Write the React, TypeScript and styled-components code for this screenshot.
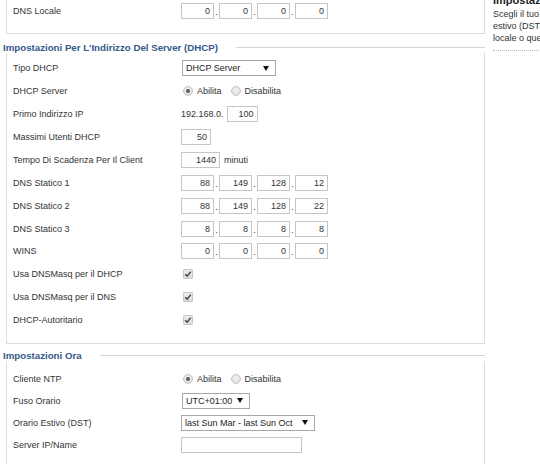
import React from "react";
import styled, { createGlobalStyle } from "styled-components";

const GlobalStyle = createGlobalStyle`
  html, body { margin: 0; padding: 0; background: #fff; overflow: hidden; }
  body {
    font-family: "Liberation Sans", Arial, sans-serif;
    font-size: 9px;
    color: #333;
  }
`;

const Page = styled.div`
  display: flex;
  width: 540px;
  height: 464px;
  overflow: hidden;
`;

const Main = styled.div`
  width: 482px;
  flex-shrink: 0;
  padding-left: 3px;
  display: flex;
  flex-direction: column;
`;

const Side = styled.aside`
  flex-shrink: 0;
  width: 260px;
  margin-left: 8px;
  margin-top: -4px;
  padding-bottom: 6px;
  border-bottom: 1px dotted #b8b8b8;
  align-self: flex-start;
`;

const SideTitle = styled.div`
  font-weight: bold;
  font-size: 11px;
  line-height: 9px;
  margin-bottom: 3px;
  color: #222;
  white-space: nowrap;
`;

const SideText = styled.div`
  line-height: 12px;
  white-space: nowrap;
  color: #333;
`;

const Box = styled.div<{ $pt: number; $pb: number }>`
  margin-left: 3px;
  border: 1px solid #dcdcdc;
  border-top: none;
  padding: ${(p) => p.$pt}px 6px ${(p) => p.$pb}px 6px;
`;

const Header = styled.div<{ $mt: number }>`
  display: flex;
  align-items: center;
  height: 14px;
  margin-top: ${(p) => p.$mt}px;
`;

const Legend = styled.div`
  font-weight: bold;
  font-size: 9.7px;
  color: #34598a;
  padding-right: 18px;
  white-space: nowrap;
`;

const HLine = styled.div`
  flex: 1;
  height: 1px;
  background: #d4d4d4;
`;

const Row = styled.div<{ $h: number }>`
  display: grid;
  grid-template-columns: 168px 1fr;
  align-items: center;
  height: ${(p) => p.$h}px;
`;

const Label = styled.div`
  white-space: nowrap;
  color: #333;
`;

const Field = styled.div`
  display: flex;
  align-items: center;
  white-space: nowrap;
`;

const TextBox = styled.div<{ $w: number; $left?: boolean }>`
  box-sizing: border-box;
  width: ${(p) => p.$w}px;
  height: 16px;
  border: 1px solid #c6c6c6;
  background: #fff;
  display: flex;
  align-items: center;
  justify-content: ${(p) => (p.$left ? "flex-start" : "flex-end")};
  padding: 0 3px;
  color: #333;
`;

const Dot = styled.span`
  width: 5px;
  text-align: center;
  align-self: flex-end;
  padding-bottom: 2px;
  line-height: 9px;
`;

const After = styled.span`
  margin-left: 4px;
`;

const Before = styled.span`
  margin-right: 3px;
`;

const Select = styled.div<{ $w: number; $ml?: number }>`
  box-sizing: border-box;
  width: ${(p) => p.$w}px;
  height: 16px;
  margin-left: ${(p) => p.$ml ?? 0}px;
  border: 1px solid #a8a8a8;
  background: #fff;
  display: flex;
  align-items: center;
  justify-content: space-between;
  padding: 0 6px 0 3px;
  color: #222;
`;

const Caret = styled.span`
  width: 0;
  height: 0;
  border-left: 3px solid transparent;
  border-right: 3px solid transparent;
  border-top: 5px solid #111;
`;

const RadioGroup = styled.div`
  display: flex;
  align-items: center;
`;

const RadioLabel = styled.label`
  display: flex;
  align-items: center;
  margin-right: 7px;
`;

const RadioDisc = styled.span<{ $on?: boolean }>`
  box-sizing: border-box;
  width: 10px;
  height: 10px;
  border-radius: 50%;
  border: 1px solid #c4c4c4;
  background: radial-gradient(circle at 50% 40%, #f2f2f2 0%, #dadada 100%);
  margin: 0 4px 0 2px;
  display: flex;
  align-items: center;
  justify-content: center;
  &::after {
    content: "";
    display: ${(p) => (p.$on ? "block" : "none")};
    width: 4px;
    height: 4px;
    border-radius: 50%;
    background: #5a5a5a;
  }
`;

const Check = styled.span`
  box-sizing: border-box;
  width: 10px;
  height: 10px;
  margin-left: 2px;
  border: 1px solid #c8c8c8;
  border-radius: 1px;
  background: linear-gradient(#ececec, #dcdcdc);
  display: flex;
  align-items: center;
  justify-content: center;
`;

const Ip = ({ v }: { v: string[] }) => (
  <Field>
    {v.map((o, i) => (
      <React.Fragment key={i}>
        <TextBox $w={33}>{o}</TextBox>
        {i < 3 && <Dot>.</Dot>}
      </React.Fragment>
    ))}
  </Field>
);

const Radios = ({ on }: { on: boolean }) => (
  <RadioGroup>
    <RadioLabel>
      <RadioDisc $on={on} />
      Abilita
    </RadioLabel>
    <RadioLabel>
      <RadioDisc $on={!on} />
      Disabilita
    </RadioLabel>
  </RadioGroup>
);

const Checked = () => (
  <Check>
    <svg width="8" height="8" viewBox="0 0 8 8">
      <path d="M1.2 4.2 L3.2 6.2 L6.8 1.6" stroke="#444" strokeWidth="1.5" fill="none" />
    </svg>
  </Check>
);

const DH = 22.9;

export default function App() {
  return (
    <>
      <GlobalStyle />
      <Page>
        <Main>
          <Box $pt={0} $pb={10}>
            <Row $h={DH}>
              <Label>DNS Locale</Label>
              <Ip v={["0", "0", "0", "0"]} />
            </Row>
          </Box>

          <Header $mt={8}>
            <Legend>Impostazioni Per L'Indirizzo Del Server (DHCP)</Legend>
            <HLine />
          </Header>
          <Box $pt={4} $pb={11}>
            <Row $h={DH}>
              <Label>Tipo DHCP</Label>
              <Field>
                <Select $w={94} $ml={1}>
                  DHCP Server
                  <Caret />
                </Select>
              </Field>
            </Row>
            <Row $h={DH}>
              <Label>DHCP Server</Label>
              <Radios on />
            </Row>
            <Row $h={DH}>
              <Label>Primo Indirizzo IP</Label>
              <Field>
                <Before>192.168.0.</Before>
                <TextBox $w={31}>100</TextBox>
              </Field>
            </Row>
            <Row $h={DH}>
              <Label>Massimi Utenti DHCP</Label>
              <Field>
                <TextBox $w={30}>50</TextBox>
              </Field>
            </Row>
            <Row $h={DH}>
              <Label>Tempo Di Scadenza Per Il Client</Label>
              <Field>
                <TextBox $w={39}>1440</TextBox>
                <After>minuti</After>
              </Field>
            </Row>
            <Row $h={DH}>
              <Label>DNS Statico 1</Label>
              <Ip v={["88", "149", "128", "12"]} />
            </Row>
            <Row $h={DH}>
              <Label>DNS Statico 2</Label>
              <Ip v={["88", "149", "128", "22"]} />
            </Row>
            <Row $h={DH}>
              <Label>DNS Statico 3</Label>
              <Ip v={["8", "8", "8", "8"]} />
            </Row>
            <Row $h={DH}>
              <Label>WINS</Label>
              <Ip v={["0", "0", "0", "0"]} />
            </Row>
            <Row $h={DH}>
              <Label>Usa DNSMasq per il DHCP</Label>
              <Field>
                <Checked />
              </Field>
            </Row>
            <Row $h={DH}>
              <Label>Usa DNSMasq per il DNS</Label>
              <Field>
                <Checked />
              </Field>
            </Row>
            <Row $h={DH}>
              <Label>DHCP-Autoritario</Label>
              <Field>
                <Checked />
              </Field>
            </Row>
          </Box>

          <Header $mt={6}>
            <Legend>Impostazioni Ora</Legend>
            <HLine />
          </Header>
          <Box $pt={7} $pb={40}>
            <Row $h={22}>
              <Label>Cliente NTP</Label>
              <Radios on />
            </Row>
            <Row $h={22}>
              <Label>Fuso Orario</Label>
              <Field>
                <Select $w={68} $ml={1}>
                  UTC+01:00
                  <Caret />
                </Select>
              </Field>
            </Row>
            <Row $h={22}>
              <Label>Orario Estivo (DST)</Label>
              <Field>
                <Select $w={134}>
                  last Sun Mar - last Sun Oct
                  <Caret />
                </Select>
              </Field>
            </Row>
            <Row $h={22}>
              <Label>Server IP/Name</Label>
              <Field>
                <TextBox $w={121} $left />
              </Field>
            </Row>
          </Box>
        </Main>

        <Side>
          <SideTitle>Impostazioni Ora</SideTitle>
          <SideText>Scegli il tuo fuso orario e il periodo dell'orario</SideText>
          <SideText>estivo (DST). Il router può usare l'ora</SideText>
          <SideText>locale o quella UTC.</SideText>
        </Side>
      </Page>
    </>
  );
}
